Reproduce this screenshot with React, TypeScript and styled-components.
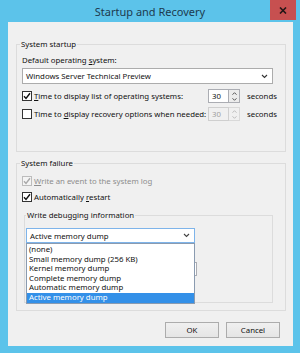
import React from 'react';
import styled, { createGlobalStyle } from 'styled-components';

const Global = createGlobalStyle`
  html, body { margin: 0; padding: 0; background: #fff; }
  body { font-family: "Noto Sans", "Open Sans", sans-serif; }
  * { box-sizing: border-box; }
`;

const Window = styled.div`
  width: 300px;
  height: 353px;
  background: #5cc3ea;
  display: flex;
  flex-direction: column;
`;

const TitleBar = styled.div`
  height: 22px;
  display: grid;
  grid-template-columns: 1fr auto 1fr;
  align-items: center;
`;

const Title = styled.div`
  grid-column: 2;
  font-size: 11px;
  color: #1d3a4e;
  line-height: 24px;
`;

const CloseButton = styled.div`
  grid-column: 3;
  justify-self: end;
  align-self: start;
  width: 26px;
  height: 20px;
  margin-right: 4px;
  background: #c75050;
  display: flex;
  align-items: center;
  justify-content: center;
`;

const Content = styled.div`
  flex: 1;
  margin: 0 7px 7px 8px;
  background: #f0f0f0;
  display: flex;
  flex-direction: column;
  font-size: 7.8px;
  color: #111;
`;

const Group = styled.fieldset<{ $mt: number; $ml: number; $mr: number; $pl: number; $pr: number; $pb: number }>`
  margin: ${p => p.$mt}px ${p => p.$mr}px 0 ${p => p.$ml}px;
  border: 1px solid #dcdcdc;
  padding: 0 ${p => p.$pr}px ${p => p.$pb}px ${p => p.$pl}px;
  min-width: 0;
  display: flex;
  flex-direction: column;
`;

const Legend = styled.legend<{ $ml?: number }>`
  padding: 0 1px;
  margin-left: ${p => p.$ml ?? -2}px;
  line-height: 10px;
  font-size: 7.8px;
`;

const Text = styled.div<{ $mt?: number }>`
  line-height: 10px;
  margin-top: ${p => p.$mt ?? 0}px;
  white-space: nowrap;
`;

const Select = styled.div<{ $mt: number; $w?: number; $h: number; $focus?: boolean }>`
  margin-top: ${p => p.$mt}px;
  height: ${p => p.$h}px;
  width: ${p => (p.$w ? `${p.$w}px` : '100%')};
  background: #fff;
  border: 1px solid ${p => (p.$focus ? '#7eb4ea' : '#acacac')};
  display: flex;
  align-items: center;
  justify-content: space-between;
  padding: 0 4px 0 3px;
  white-space: nowrap;
`;

const Row = styled.div<{ $mt: number }>`
  margin-top: ${p => p.$mt}px;
  height: 14px;
  display: grid;
  grid-template-columns: 186px 32px auto;
  align-items: center;
`;

const CheckLine = styled.div<{ $mt?: number; $disabled?: boolean }>`
  margin-top: ${p => p.$mt ?? 0}px;
  display: flex;
  align-items: center;
  gap: 2px;
  line-height: 10px;
  white-space: nowrap;
  color: ${p => (p.$disabled ? '#8d8d8d' : 'inherit')};
`;

const Box = styled.span<{ $disabled?: boolean }>`
  width: 10px;
  height: 10px;
  flex: none;
  border: 1px solid ${p => (p.$disabled ? '#bcbcbc' : '#333')};
  background: ${p => (p.$disabled ? '#f4f4f4' : '#fff')};
  display: flex;
  align-items: center;
  justify-content: center;
`;

const Spin = styled.div<{ $disabled?: boolean }>`
  height: 14px;
  display: grid;
  grid-template-columns: 21px 11px;
  color: ${p => (p.$disabled ? '#a0a0a0' : 'inherit')};
`;

const SpinField = styled.div<{ $disabled?: boolean }>`
  border: 1px solid ${p => (p.$disabled ? '#cfcfcf' : '#abadb3')};
  background: ${p => (p.$disabled ? '#f0f0f0' : '#fff')};
  padding-left: 3px;
  display: flex;
  align-items: center;
`;

const SpinArrows = styled.div<{ $disabled?: boolean }>`
  border: 1px solid ${p => (p.$disabled ? '#d9d9d9' : '#abadb3')};
  border-left: none;
  display: grid;
  grid-template-rows: 1fr 1fr;
  background: ${p => (p.$disabled ? '#f0f0f0' : '#ececec')};
`;

const Arrow = styled.div`
  display: flex;
  align-items: center;
  justify-content: center;
`;

const Seconds = styled.div`
  padding-left: 7px;
  line-height: 10px;
`;

const ComboWrap = styled.div`
  position: relative;
  margin-top: 8px;
  width: 169px;
`;

const DropList = styled.div`
  position: absolute;
  top: 100%;
  left: 0;
  width: 169px;
  height: 61px;
  background: #fff;
  border: 1px solid #8a9bb0;
  padding: 1px 0;
  z-index: 2;
`;

const Item = styled.div<{ $selected?: boolean }>`
  height: 9.6px;
  line-height: 9.6px;
  padding-left: 2px;
  white-space: nowrap;
  background: ${p => (p.$selected ? '#3390e8' : 'transparent')};
  color: ${p => (p.$selected ? '#fff' : 'inherit')};
`;

const TextBox = styled.div`
  margin-top: 19px;
  height: 14px;
  width: 171px;
  background: #fff;
  border: 1px solid #abadb3;
`;

const Buttons = styled.div`
  margin-top: auto;
  display: flex;
  justify-content: flex-end;
  gap: 7px;
  padding: 0 13px 8px 0;
`;

const Button = styled.div`
  width: 54px;
  height: 16px;
  border: 1px solid #acacac;
  background: linear-gradient(#f0f0f0, #e5e5e5);
  display: flex;
  align-items: center;
  justify-content: center;
  font-size: 7.8px;
`;

const Check = ({ color }: { color: string }) => (
  <svg width="8" height="8" viewBox="0 0 8 8">
    <path d="M1 4.2 L3 6.4 L7 1.2" fill="none" stroke={color} strokeWidth="1.4" />
  </svg>
);

const Chevron = ({ color = '#333' }: { color?: string }) => (
  <svg width="7" height="5" viewBox="0 0 7 5">
    <path d="M1 1 L3.5 3.5 L6 1" fill="none" stroke={color} strokeWidth="1.1" />
  </svg>
);

const Up = ({ color }: { color: string }) => (
  <svg width="5" height="3" viewBox="0 0 5 3">
    <path d="M0.5 2.7 L2.5 0.7 L4.5 2.7" fill="none" stroke={color} strokeWidth="0.9" />
  </svg>
);

const Down = ({ color }: { color: string }) => (
  <svg width="5" height="3" viewBox="0 0 5 3">
    <path d="M0.5 0.3 L2.5 2.3 L4.5 0.3" fill="none" stroke={color} strokeWidth="0.9" />
  </svg>
);

const SpinBox = ({ disabled }: { disabled?: boolean }) => {
  const c = disabled ? '#b5b5b5' : '#444';
  return (
    <Spin $disabled={disabled}>
      <SpinField $disabled={disabled}>30</SpinField>
      <SpinArrows $disabled={disabled}>
        <Arrow><Up color={c} /></Arrow>
        <Arrow><Down color={c} /></Arrow>
      </SpinArrows>
    </Spin>
  );
};

const items = [
  '(none)',
  'Small memory dump (256 KB)',
  'Kernel memory dump',
  'Complete memory dump',
  'Automatic memory dump',
  'Active memory dump',
];

export default function App() {
  return (
    <>
      <Global />
      <Window>
        <TitleBar>
          <Title>Startup and Recovery</Title>
          <CloseButton>
            <svg width="8" height="7" viewBox="0 0 8 7">
              <path d="M1 0.5 L7 6.5 M7 0.5 L1 6.5" stroke="#231616" strokeWidth="1.6" />
            </svg>
          </CloseButton>
        </TitleBar>
        <Content>
          <Group $mt={17} $ml={8} $mr={7} $pl={5} $pr={12} $pb={30}>
            <Legend>System startup</Legend>
            <Text $mt={6}>Default operating <u>s</u>ystem:</Text>
            <Select $mt={3} $h={16}>
              <span>Windows Server Technical Preview</span>
              <Chevron />
            </Select>
            <Row $mt={5}>
              <CheckLine>
                <Box><Check color="#111" /></Box>
                <span><u>T</u>ime to display list of operating systems:</span>
              </CheckLine>
              <SpinBox />
              <Seconds>seconds</Seconds>
            </Row>
            <Row $mt={4}>
              <CheckLine>
                <Box />
                <span>Time to <u>d</u>isplay recovery options when needed:</span>
              </CheckLine>
              <SpinBox disabled />
              <Seconds>seconds</Seconds>
            </Row>
          </Group>
          <Group $mt={6} $ml={8} $mr={7} $pl={5} $pr={12} $pb={7}>
            <Legend>System failure</Legend>
            <CheckLine $mt={8} $disabled>
              <Box $disabled><Check color="#a8a8a8" /></Box>
              <span><u>W</u>rite an event to the system log</span>
            </CheckLine>
            <CheckLine $mt={6}>
              <Box><Check color="#111" /></Box>
              <span>Automatically <u>r</u>estart</span>
            </CheckLine>
            <Group $mt={8} $ml={2} $mr={0} $pl={1} $pr={0} $pb={26}>
              <Legend $ml={0}>Write debugging information</Legend>
              <ComboWrap>
                <Select $mt={0} $h={15} $w={169} $focus>
                  <span>Active memory dump</span>
                  <Chevron color="#444" />
                </Select>
                <DropList>
                  {items.map((t, i) => (
                    <Item key={t} $selected={i === items.length - 1}>{t}</Item>
                  ))}
                </DropList>
              </ComboWrap>
              <TextBox />
            </Group>
          </Group>
          <Buttons>
            <Button>OK</Button>
            <Button>Cancel</Button>
          </Buttons>
        </Content>
      </Window>
    </>
  );
}
